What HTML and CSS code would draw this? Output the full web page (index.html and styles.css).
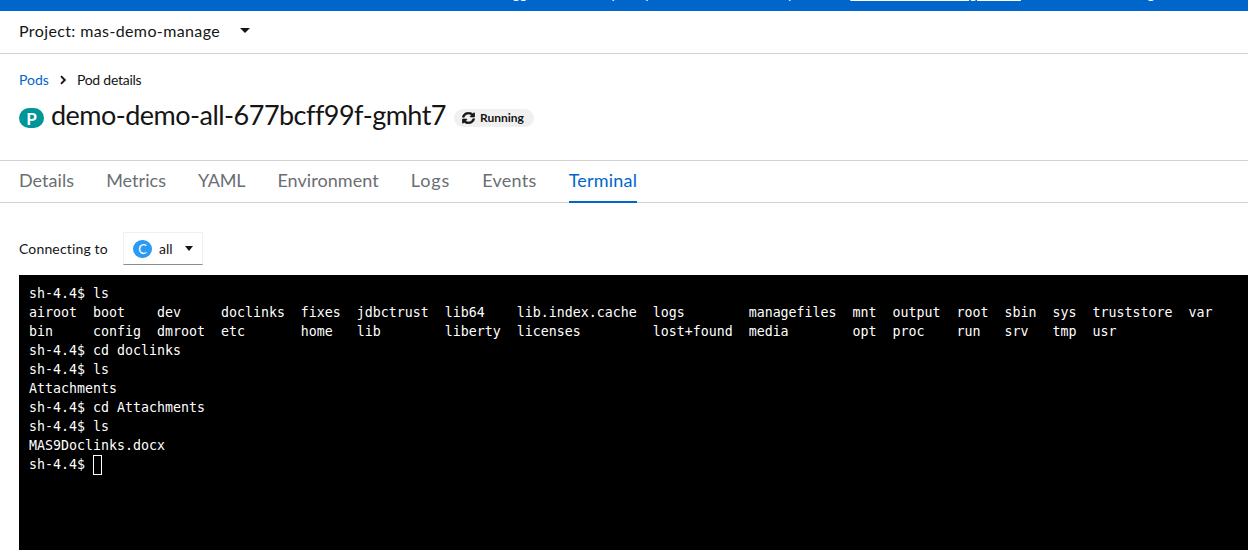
FILE: index.html
```html
<!DOCTYPE html>
<html lang="en">
<head>
<meta charset="utf-8">
<title>Pod details</title>
<link rel="stylesheet" href="styles.css">
</head>
<body>
<div class="banner"><p class="banner-text">You are logged in as a temporary administrative user. Update the <a class="banner-link" href="#">cluster OAuth configuration</a> to allow others to log in.</p></div>
<div class="project-bar">
  <span class="project-name">Project: mas-demo-manage</span>
  <span class="caret caret-lg"></span>
</div>
<div class="head">
  <nav class="crumbs">
    <a class="crumb-link" href="#">Pods</a>
    <svg class="crumb-sep" viewBox="0 0 8 10" width="8" height="10"><path d="M2 1.2 5.8 5 2 8.8" fill="none" stroke="#151515" stroke-width="1.9"/></svg>
    <span class="crumb-current">Pod details</span>
  </nav>
  <div class="title-row">
    <span class="res-badge res-pod">P</span>
    <h1 class="title">demo-demo-all-677bcff99f-gmht7</h1>
    <span class="status">
      <svg class="sync" viewBox="0 0 512 512" preserveAspectRatio="none"><path fill="#151515" stroke="#151515" stroke-width="24" d="M370.7 133.3C339.500 104 298.900 88 255.800 88c-77.500.1-144.300 53.200-162.800 126.900-1.300 5.400-6.100 9.200-11.700 9.200H24.100c-7.500 0-13.200-6.800-11.800-14.200C33.900 94.900 134.800 8 256 8c66.400 0 126.800 26.100 171.300 68.700L463 41c15.100-15.100 41-4.400 41 17v134c0 13.300-10.700 24-24 24H346c-21.400 0-32.100-25.900-17-41l41.700-41.700zM32 296h134c21.400 0 32.100 25.900 17 41l-41.800 41.800c31.300 29.300 71.800 45.300 114.900 45.200 77.400-.1 144.300-53.100 162.800-126.800 1.300-5.400 6.100-9.200 11.700-9.200h57.300c7.500 0 13.200 6.800 11.800 14.200C478.100 417.100 377.200 504 256 504c-66.400 0-126.800-26.100-171.300-68.700L49 471c-15.100 15.100-41 4.400-41-17V320c0-13.300 10.700-24 24-24z"/></svg>
      Running
    </span>
  </div>
</div>
<ul class="tabs">
  <li class="tab">Details</li>
  <li class="tab">Metrics</li>
  <li class="tab tab-yaml">YAML</li>
  <li class="tab">Environment</li>
  <li class="tab tab-logs">Logs</li>
  <li class="tab tab-events">Events</li>
  <li class="tab tab-active">Terminal</li>
</ul>
<div class="connect">
  <span class="connect-label">Connecting to</span>
  <div class="select">
    <span class="res-badge res-container">C</span>
    <span>all</span>
    <span class="caret select-caret"></span>
  </div>
</div>
<pre class="terminal">sh-4.4$ ls
airoot  boot    dev     doclinks  fixes  jdbctrust  lib64    lib.index.cache  logs        managefiles  mnt  output  root  sbin  sys  truststore  var
bin     config  dmroot  etc       home   lib        liberty  licenses         lost+found  media        opt  proc    run   srv   tmp  usr
sh-4.4$ cd doclinks
sh-4.4$ ls
Attachments
sh-4.4$ cd Attachments
sh-4.4$ ls
MAS9Doclinks.docx
sh-4.4$ <span class="cursor"></span></pre>
</body>
</html>
```
FILE: styles.css
```css
* { box-sizing: border-box; }
html, body { margin: 0; height: 550px; overflow: hidden; background: #fff; }
body { font-family: "Lato", "Liberation Sans", sans-serif; font-size: 14px; color: #151515; }
.banner { height: 11px; background: #06c; overflow: hidden; display: flex; justify-content: flex-start; align-items: flex-end; padding-left: 452px; }
.banner-text { margin: 0 0 7px; color: #fff; font-size: 14px; line-height: 20px; white-space: nowrap; flex: none; }
.banner-link { color: #fff; text-decoration: underline; }
.project-bar { height: 43px; border-bottom: 1px solid #d2d2d2; display: flex; align-items: center; padding: 0 19px 3px; font-size: 16px; letter-spacing: .38px; }
.project-name { width: 221px; }
.caret { display: inline-block; width: 0; height: 0; border-left: 4.500px solid transparent; border-right: 4.500px solid transparent; border-top: 5px solid #151515; }
.caret-lg { border-left-width: 5px; border-right-width: 5px; border-top-width: 5px; }
.head { height: 106px; padding: 16px 19px 0; }
.crumbs { display: flex; align-items: center; gap: 10px; height: 20px; line-height: 20px; font-size: 14px; }
.crumb-link { color: #06c; text-decoration: none; }
.crumb-sep { flex: none; }
.crumb-current { letter-spacing: -.25px; }
.title-row { display: flex; align-items: center; margin-top: 7px; height: 36px; }
.title { margin: 0 8px 0 0; font-size: 27px; font-weight: 400; line-height: 36px; letter-spacing: -.53px; color: #151515; }
.res-badge { display: inline-flex; align-items: center; justify-content: center; border-radius: 20px; color: #fff; flex: none; }
.res-pod { width: 25px; height: 20px; margin: 6px 7px 0 0; background: #009596; font-weight: 700; font-size: 17px; }
.res-container { width: 19px; height: 18px; background: #2b9af3; font-size: 13px; }
.status { display: inline-flex; align-items: center; gap: 5px; width: 80px; height: 18px; margin: 5px 0 0 0; padding: 0 8px; border-radius: 10px; background: #f0f0f0; font-size: 12px; font-weight: 700; white-space: nowrap; }
.sync { flex: none; width: 13px; height: 12px; }
.tabs { list-style: none; margin: 0; padding: 0 19px; height: 43px; display: flex; gap: 32px; border-top: 1px solid #d2d2d2; border-bottom: 1px solid #d2d2d2; font-size: 18px; letter-spacing: .05px; color: #6a6e73; }
.tab { display: flex; align-items: center; height: 38px; }
.tab-yaml { letter-spacing: -.2px; }
.tab-logs { letter-spacing: .9px; }
.tab-events { letter-spacing: .3px; }
.tab-active { color: #06c; border-bottom: 2px solid #06c; height: 42px; padding-bottom: 2px; letter-spacing: .2px; }
.connect { height: 72px; padding: 29px 19px 0; display: flex; align-items: flex-start; gap: 15px; }
.connect-label { line-height: 33px; width: 89px; letter-spacing: .15px; }
.select { width: 80px; height: 33px; display: flex; align-items: center; padding: 0 9px; gap: 7px; border: 1px solid #f0f0f0; border-bottom-color: #8a8d90; }
.select-caret { margin-left: 5px; }
.terminal { margin: 0 0 0 19px; height: 275px; padding: 9px 10px; background: #000; color: #fff; font-family: "DejaVu Sans Mono", monospace; font-size: 13.290px; line-height: 19px; white-space: pre; overflow: hidden; }
.cursor { display: inline-block; width: 9px; height: 20px; border: 1px solid #fff; vertical-align: top; }
```
